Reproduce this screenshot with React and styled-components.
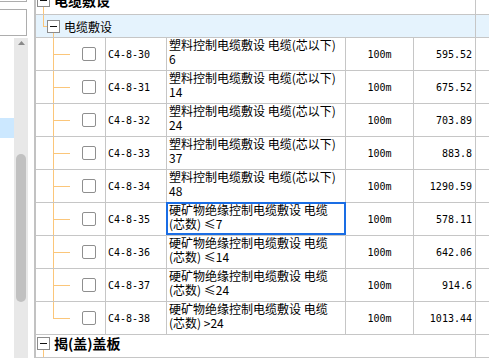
import React from "react";
import styled, { createGlobalStyle } from "styled-components";

const GRID = "#c6c6c6";
const TREE = "#fbc67a";
const MONO = `"DejaVu Sans Mono", "Liberation Mono", monospace`;
const CJK = `"Noto Sans CJK SC", "Noto Sans", sans-serif`;

const Global = createGlobalStyle`
  *, *::before, *::after { box-sizing: border-box; }
  html, body { margin: 0; padding: 0; background: #fff; overflow: hidden; }
  body { width: 489px; height: 358px; font-family: ${CJK}; color: #000; }
`;

const Page = styled.div`
  display: flex;
  width: 489px;
  height: 358px;
  overflow: hidden;
  background: #fff;
`;

/* ---------- left panel ---------- */
const LeftPanel = styled.div`
  width: 36px;
  flex: none;
  display: flex;
  flex-direction: column;
  border-right: 2px solid #c2c2c2;
`;

const FieldStub = styled.div`
  width: 27px;
  height: 2px;
  border-right: 1px solid #adadad;
  border-bottom: 1px solid #adadad;
`;

const FieldBox = styled.div`
  width: 27px;
  height: 27px;
  margin-top: 7px;
  border: 1px solid #adadad;
  border-left: none;
`;

const ScrollRow = styled.div`
  flex: 1;
  display: flex;
  margin-top: 2px;
`;

const ListCol = styled.div`
  width: 14px;
  flex: none;
  display: flex;
  flex-direction: column;
`;

const ListHighlight = styled.div`
  margin-top: ${(p) => p.$offset}px;
  height: 20px;
  background: #cce8ff;
`;

const Scrollbar = styled.div`
  width: 14px;
  flex: none;
  background: #e8e8e8;
  display: flex;
  flex-direction: column;
  align-items: center;
`;

const ArrowUp = styled.svg`
  margin-top: 3px;
  flex: none;
`;

const Thumb = styled.div`
  width: 10px;
  height: ${(p) => p.$size}px;
  margin-top: ${(p) => p.$offset}px;
  border-radius: 5px;
  background: #c1c1c1;
`;

/* ---------- table ---------- */
const TableArea = styled.div`
  flex: 1;
  min-width: 0;
  overflow: hidden;
`;

const TableBody = styled.div`
  margin-top: -8px;
  display: flex;
  flex-direction: column;
`;

const GroupRow = styled.div`
  display: grid;
  grid-template-columns: 440px 1fr;
  height: 23px;
  flex: none;
  border-bottom: 1px solid ${GRID};
  background: ${(p) => (p.$tint ? "#e5f3fd" : "#fff")};
`;

const GroupMain = styled.div`
  display: flex;
  align-items: stretch;
  padding-left: ${(p) => p.$indent}px;
  border-right: 1px solid ${GRID};
`;

const Blank = styled.div``;

const ToggleCol = styled.div`
  width: 13px;
  flex: none;
  display: flex;
  flex-direction: column;
  align-items: center;
`;

const ToggleGap = styled.div`
  flex: ${(p) => (p.$fixed != null ? `0 0 ${p.$fixed}px` : "1")};
`;

const ToggleBox = styled.div`
  width: 13px;
  height: 13px;
  flex: none;
  border: 1px solid #8b8b8b;
  background: #fff;
  display: flex;
  align-items: center;
  justify-content: center;
`;

const MinusBar = styled.div`
  width: 7px;
  height: 1px;
  background: #111;
`;

const Stem = styled.div`
  flex: 1;
  width: 1px;
  background: ${(p) => (p.$on ? TREE : "transparent")};
`;

const Elbow = styled.div`
  margin-left: ${(p) => p.$left}px;
  width: ${(p) => p.$width}px;
  flex: none;
  display: flex;
  flex-direction: column;
`;

const ElbowTop = styled.div`
  flex: 1;
  border-left: 1px solid ${TREE};
  border-bottom: 1px solid ${TREE};
`;

const ElbowBottom = styled.div`
  flex: 1;
  border-left: 1px solid ${(p) => (p.$continue ? TREE : "transparent")};
`;

const GroupTitle = styled.div`
  margin-left: 4px;
  white-space: nowrap;
  font-family: ${CJK};
  ${(p) =>
    p.$level === 0
      ? `font-size: 14px; font-weight: 700; line-height: 17px; align-self: flex-start;`
      : `font-size: 12px; font-weight: 400; line-height: 15px; align-self: center;`}
`;

const DataRow = styled.div`
  display: grid;
  grid-template-columns: 70px 61px 179px 68px 62px 1fr;
  height: 33px;
  flex: none;
  border-bottom: 1px solid ${GRID};
`;

const Cell = styled.div`
  min-width: 0;
  display: flex;
  align-items: center;
  border-right: 1px solid ${GRID};
`;

const TreeCell = styled(Cell)`
  align-items: stretch;
`;

const CheckBox = styled.div`
  width: 14px;
  height: 14px;
  flex: none;
  align-self: center;
  margin-left: 12px;
  border: 1px solid #8f8f8f;
  border-radius: 2px;
  background: #fff;
`;

const CodeCell = styled(Cell)`
  padding-left: 2px;
  font-family: ${MONO};
  font-size: 10px;
  white-space: nowrap;
`;

const DescCell = styled(Cell)`
  position: relative;
  flex-direction: column;
  align-items: stretch;
  justify-content: flex-start;
  padding: 0 0 0 2px;
  font-family: ${CJK};
  font-size: 12px;
  line-height: 14px;
`;

const DescLine = styled.div`
  white-space: nowrap;
`;

const FocusRing = styled.div`
  position: absolute;
  left: -1px;
  right: -1px;
  top: -1px;
  bottom: 0;
  border: 2px solid #1a6de4;
  pointer-events: none;
  z-index: 1;
`;

const UnitCell = styled(Cell)`
  justify-content: center;
  font-family: ${MONO};
  font-size: 10px;
`;

const PriceCell = styled(Cell)`
  justify-content: flex-end;
  padding-right: 3px;
  font-family: ${MONO};
  font-size: 10px;
`;

const TailCell = styled.div``;

const plastic = "塑料控制电缆敷设 电缆(芯以下)";
const mineral = "硬矿物绝缘控制电缆敷设 电缆";

const rows = [
  { code: "C4-8-30", l1: plastic, l2: "6", price: "595.52" },
  { code: "C4-8-31", l1: plastic, l2: "14", price: "675.52" },
  { code: "C4-8-32", l1: plastic, l2: "24", price: "703.89" },
  { code: "C4-8-33", l1: plastic, l2: "37", price: "883.8" },
  { code: "C4-8-34", l1: plastic, l2: "48", price: "1290.59" },
  { code: "C4-8-35", l1: mineral, l2: "(芯数) ≤7", price: "578.11", focus: true },
  { code: "C4-8-36", l1: mineral, l2: "(芯数) ≤14", price: "642.06" },
  { code: "C4-8-37", l1: mineral, l2: "(芯数) ≤24", price: "914.6" },
  { code: "C4-8-38", l1: mineral, l2: "(芯数) >24", price: "1013.44" },
];

function Toggle({ top, stem }) {
  return (
    <ToggleCol>
      <ToggleGap $fixed={top} />
      <ToggleBox>
        <MinusBar />
      </ToggleBox>
      <Stem $on={stem} />
    </ToggleCol>
  );
}

export default function App() {
  return (
    <>
      <Global />
      <Page>
        <LeftPanel>
          <FieldStub />
          <FieldBox />
          <ScrollRow>
            <ListCol>
              <ListHighlight $offset={80} />
            </ListCol>
            <Scrollbar>
              <ArrowUp width="7" height="4" viewBox="0 0 7 4">
                <path d="M0 4 L3.5 0 L7 4 Z" fill="#8a8a8a" />
              </ArrowUp>
              <Thumb $offset={109} $size={148} />
            </Scrollbar>
          </ScrollRow>
        </LeftPanel>

        <TableArea>
          <TableBody>
            <GroupRow>
              <GroupMain $indent={1}>
                <Toggle top={2} stem />
                <GroupTitle $level={0}>电缆敷设</GroupTitle>
              </GroupMain>
              <Blank />
            </GroupRow>

            <GroupRow $tint>
              <GroupMain $indent={0}>
                <Elbow $left={7} $width={4}>
                  <ElbowTop />
                  <ElbowBottom />
                </Elbow>
                <Toggle stem />
                <GroupTitle $level={1}>电缆敷设</GroupTitle>
              </GroupMain>
              <Blank />
            </GroupRow>

            {rows.map((r, i) => (
              <DataRow key={r.code}>
                <TreeCell>
                  <Elbow $left={17} $width={17}>
                    <ElbowTop />
                    <ElbowBottom $continue={i < rows.length - 1} />
                  </Elbow>
                  <CheckBox />
                </TreeCell>
                <CodeCell>{r.code}</CodeCell>
                <DescCell>
                  <DescLine>{r.l1}</DescLine>
                  <DescLine>{r.l2}</DescLine>
                  {r.focus && <FocusRing />}
                </DescCell>
                <UnitCell>100m</UnitCell>
                <PriceCell>{r.price}</PriceCell>
                <TailCell />
              </DataRow>
            ))}

            <GroupRow>
              <GroupMain $indent={1}>
                <Toggle top={2} stem />
                <GroupTitle $level={0}>揭(盖)盖板</GroupTitle>
              </GroupMain>
              <Blank />
            </GroupRow>
          </TableBody>
        </TableArea>
      </Page>
    </>
  );
}
